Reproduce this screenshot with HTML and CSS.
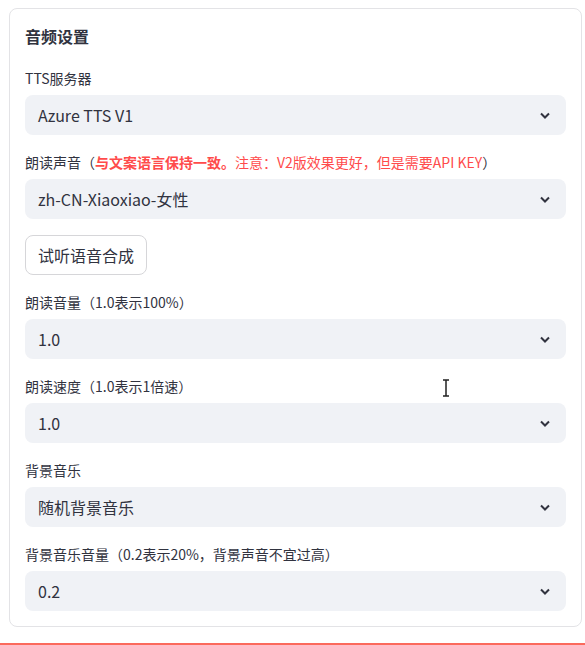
FILE: index.html
```html
<!DOCTYPE html>
<html lang="zh-CN">
<head>
    <meta charset="UTF-8">
    <meta name="viewport" content="width=device-width, initial-scale=1.0">
    <title>音频设置</title>
    <link rel="stylesheet" href="styles.css">
</head>
<body>
    <div class="page">
        <!-- audio settings card -->
        <div class="card">
            <div class="card-title">音频设置</div>

            <div class="field">
                <label class="label">TTS服务器</label>
                <div class="select">
                    <span>Azure TTS V1</span>
                    <svg class="chevron" viewBox="0 0 16 16"><path d="M4 6.5 L8 10.5 L12 6.5"/></svg>
                </div>
            </div>

            <div class="field">
                <label class="label">朗读声音（<b class="warn">与文案语言保持一致。</b><span class="warn">注意：V2版效果更好，但是需要API KEY</span>）</label>
                <div class="select">
                    <span>zh-CN-Xiaoxiao-女性</span>
                    <svg class="chevron" viewBox="0 0 16 16"><path d="M4 6.5 L8 10.5 L12 6.5"/></svg>
                </div>
            </div>

            <div>
                <button class="btn" type="button">试听语音合成</button>
            </div>

            <div class="field">
                <label class="label">朗读音量（1.0表示100%）</label>
                <div class="select">
                    <span>1.0</span>
                    <svg class="chevron" viewBox="0 0 16 16"><path d="M4 6.5 L8 10.5 L12 6.5"/></svg>
                </div>
            </div>

            <div class="field">
                <label class="label">朗读速度（1.0表示1倍速）</label>
                <div class="select">
                    <span>1.0</span>
                    <svg class="chevron" viewBox="0 0 16 16"><path d="M4 6.5 L8 10.5 L12 6.5"/></svg>
                </div>
            </div>

            <div class="field">
                <label class="label">背景音乐</label>
                <div class="select">
                    <span>随机背景音乐</span>
                    <svg class="chevron" viewBox="0 0 16 16"><path d="M4 6.5 L8 10.5 L12 6.5"/></svg>
                </div>
            </div>

            <div class="field">
                <label class="label">背景音乐音量（0.2表示20%，背景声音不宜过高）</label>
                <div class="select">
                    <span>0.2</span>
                    <svg class="chevron" viewBox="0 0 16 16"><path d="M4 6.5 L8 10.5 L12 6.5"/></svg>
                </div>
            </div>
        </div>

        <!-- mouse cursor from the capture -->
        <svg class="cursor" viewBox="0 0 8 18"><path d="M1 1 H7 M4 1 V17 M1 17 H7"/></svg>
    </div>
    <div class="bottom-bar"></div>
</body>
</html>
```

FILE: styles.css
```css
body {
    margin: 0;
    background: #fff;
    color: #31333f;
    font-family: "Noto Sans CJK SC", "Noto Sans", sans-serif;
}
.page {
    position: relative;
    padding: 8px 3px 0 9px;
}
.card {
    border: 1px solid #e3e3e6;
    border-radius: 8px;
    padding: 15px;
    display: flex;
    flex-direction: column;
    gap: 16px;
}
.card-title {
    font-size: 16px;
    font-weight: 700;
    line-height: 24px;
    margin-bottom: 3px;
}
.field {
    display: flex;
    flex-direction: column;
}
.label {
    font-size: 14px;
    line-height: 22px;
    margin-bottom: 6px;
}
.label b {
    font-weight: 700;
}
.warn {
    color: #ff4b4b;
}
.select {
    height: 40px;
    background: #f0f2f6;
    border-radius: 8px;
    display: flex;
    align-items: center;
    justify-content: space-between;
    padding: 0 13px;
    font-size: 16px;
}
.chevron {
    width: 16px;
    height: 16px;
    fill: none;
    stroke: #31333f;
    stroke-width: 2;
}
.btn {
    height: 40px;
    padding: 0 12px;
    background: #fff;
    border: 1px solid #d6d6d9;
    border-radius: 8px;
    font-family: inherit;
    font-size: 16px;
    color: #31333f;
}
.cursor {
    position: absolute;
    left: 442px;
    top: 379px;
    width: 8px;
    height: 18px;
    fill: none;
    stroke: #222;
    stroke-width: 1.5;
}
.bottom-bar {
    margin-top: 16px;
    height: 3px;
    background: #fb6a5c;
}
```
